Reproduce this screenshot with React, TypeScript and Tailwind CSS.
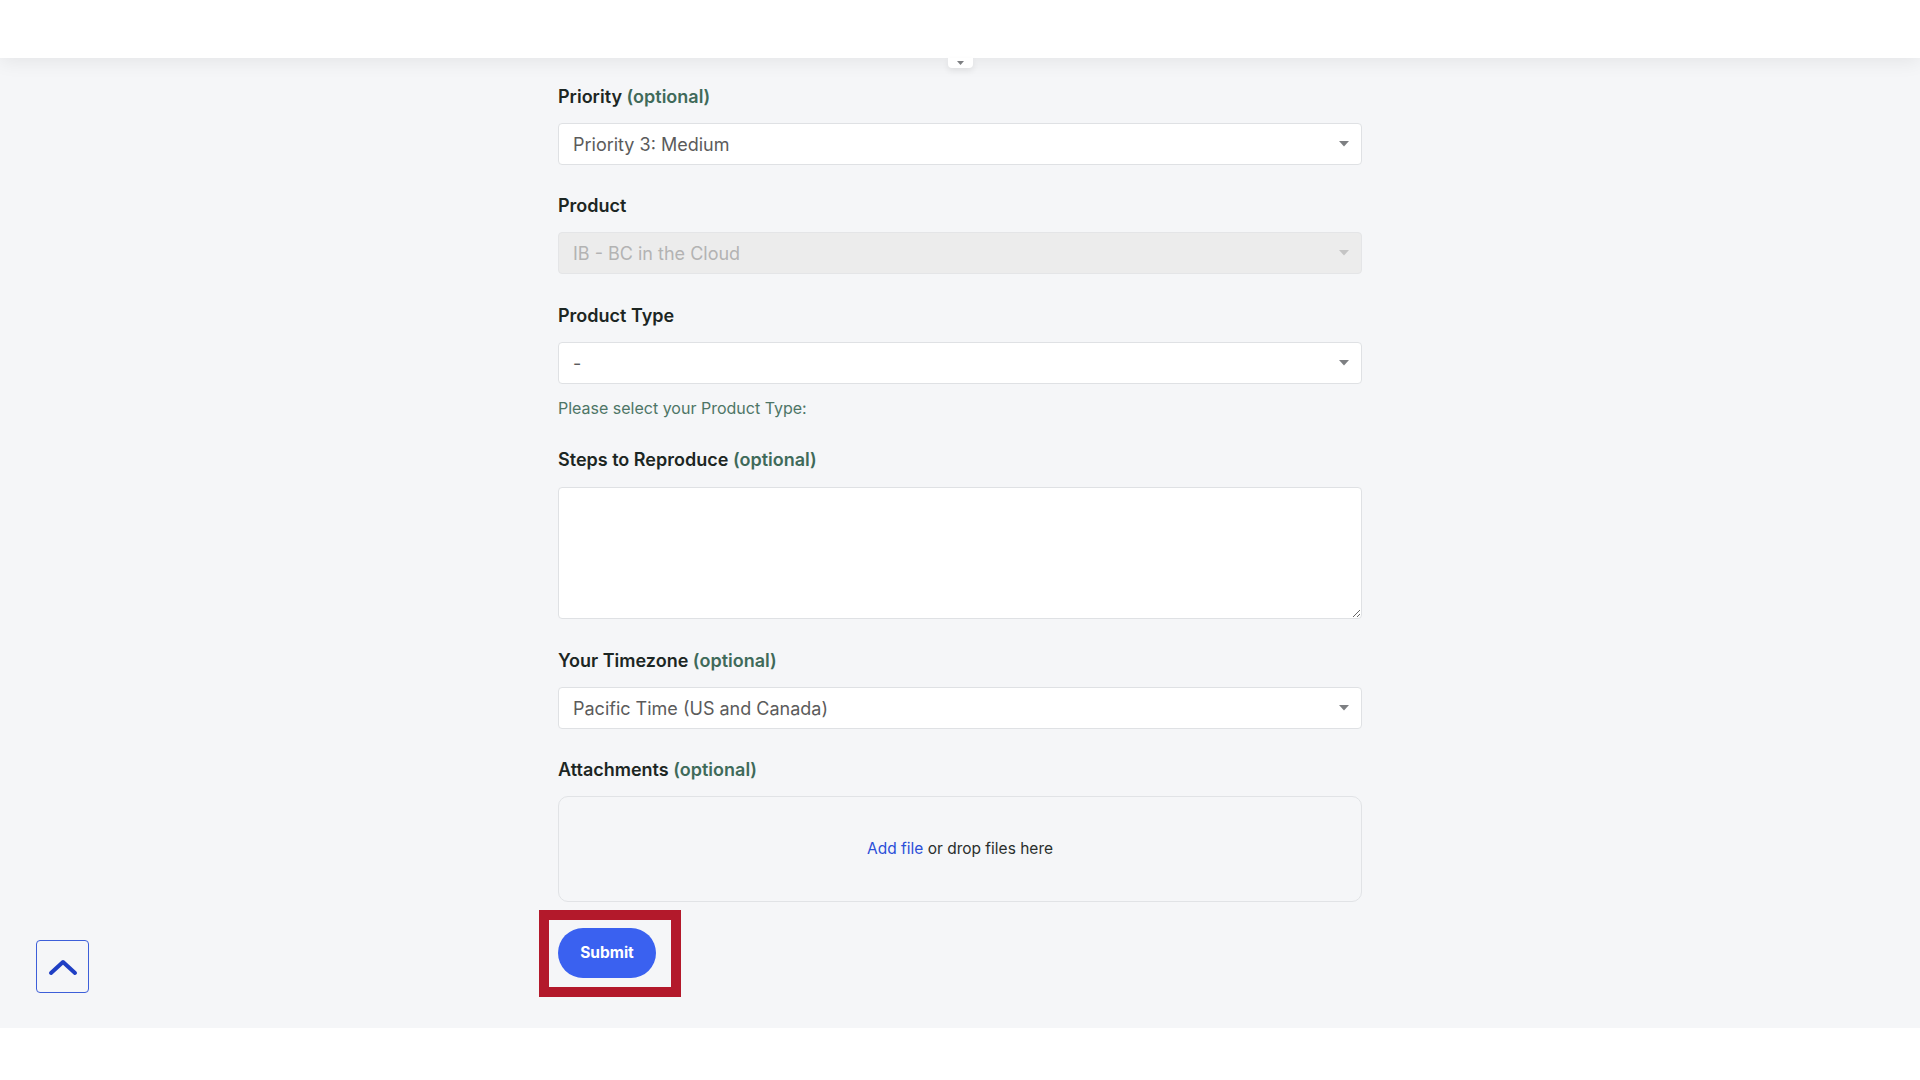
import React from "react";

function Caret() {
  return (
    <svg width="10" height="6" viewBox="0 0 10 6" className="shrink-0">
      <path d="M0 0 H10 L5 5.5 Z" fill="#7d7f82" />
    </svg>
  );
}

function Label({ text, optional }: { text: string; optional?: boolean }) {
  return (
    <div className="mb-[13px] text-[18px] leading-[27px] font-semibold text-[#1c2623]">
      {text}
      {optional && <span className="text-[#3f6a5a]"> (optional)</span>}
    </div>
  );
}

function Select({ value, disabled }: { value: string; disabled?: boolean }) {
  return (
    <div
      className={
        disabled
          ? "flex h-[42px] items-center justify-between rounded-[4px] border border-[#e4e5e7] bg-[#ececec] pl-[14px] pr-[12px] text-[18px] text-[#b3b3b3]"
          : "flex h-[42px] items-center justify-between rounded-[4px] border border-[#dfe1e4] bg-white pl-[14px] pr-[12px] text-[18px] text-[#5b5b5b]"
      }
    >
      <span>{value}</span>
      {disabled ? (
        <svg width="10" height="6" viewBox="0 0 10 6" className="shrink-0">
          <path d="M0 0 H10 L5 5.5 Z" fill="#c4c4c4" />
        </svg>
      ) : (
        <Caret />
      )}
    </div>
  );
}

export default function App() {
  return (
    <div className="relative min-h-screen bg-white font-['Inter',sans-serif]">
      <header className="relative z-10 h-[58px] bg-white shadow-[0_4px_18px_rgba(0,0,0,0.07)]">
        <div className="absolute left-[948px] top-[58px] flex h-[10px] w-[25px] items-start justify-center rounded-b-[4px] bg-white pt-[3px] shadow-[0_3px_6px_rgba(0,0,0,0.08)]">
          <svg width="7" height="4" viewBox="0 0 7 4">
            <path d="M0 0 H7 L3.5 4 Z" fill="#7d7f82" />
          </svg>
        </div>
      </header>

      <main className="bg-[#f5f6f8] pb-[50px] pt-[25px]">
        <div className="mx-auto w-[804px]">
          <div className="mb-[27px]">
            <Label text="Priority" optional />
            <Select value="Priority 3: Medium" />
          </div>

          <div className="mb-[28px]">
            <Label text="Product" />
            <Select value="IB - BC in the Cloud" disabled />
          </div>

          <div className="mb-[26px]">
            <Label text="Product Type" />
            <Select value="-" />
            <div className="mt-[12px] text-[16px] leading-[24px] text-[#4d7566]">
              Please select your Product Type:
            </div>
          </div>

          <div className="mb-[28px]">
            <div className="mb-[14px] text-[18px] leading-[27px] font-semibold text-[#1c2623]">
              Steps to Reproduce<span className="text-[#3f6a5a]"> (optional)</span>
            </div>
            <textarea className="block h-[132px] w-full resize-y rounded-[4px] border border-[#dfe1e4] bg-white p-3 text-[16px] outline-none" />
          </div>

          <div className="mb-[27px]">
            <Label text="Your Timezone" optional />
            <Select value="Pacific Time (US and Canada)" />
          </div>

          <div className="mb-[26px]">
            <Label text="Attachments" optional />
            <div className="flex h-[106px] items-center justify-center rounded-[10px] border border-[#e1e3e6] bg-[#f5f6f8] text-[15.5px] text-[#2a2f2d]">
              <span className="text-[#2b4fd8]">Add file</span>
              <span>&nbsp;or drop files here</span>
            </div>
          </div>

          <div className="relative inline-block">
            <button className="h-[50px] w-[98px] rounded-full bg-[#3a61f0] text-[15.5px] font-bold text-white">
              Submit
            </button>
            <div className="pointer-events-none absolute left-[-19px] top-[-18px] h-[87px] w-[142px] border-[10px] border-[#b3192b]" />
          </div>
        </div>
      </main>

      <button className="absolute left-[36px] top-[940px] flex h-[53px] w-[53px] items-center justify-center rounded-[4px] border border-[#3d5fd9] bg-[#f5f6f8]">
        <svg width="30" height="18" viewBox="0 0 30 18">
          <path d="M3 15 L15 4 L27 15" fill="none" stroke="#1f3fc4" strokeWidth="4" strokeLinecap="round" strokeLinejoin="round" />
        </svg>
      </button>
    </div>
  );
}
